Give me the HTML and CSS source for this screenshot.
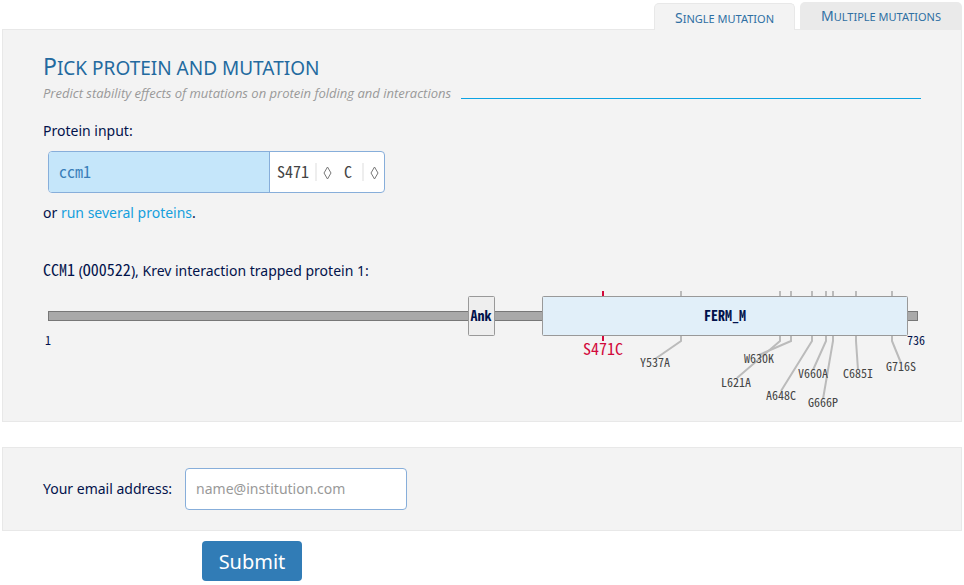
FILE: index.html
```html
<!DOCTYPE html>
<html lang="en">
<head>
<meta charset="utf-8">
<title>Pick protein and mutation</title>
<link rel="stylesheet" href="styles.css">
</head>
<body>
<nav class="tabs">
  <a class="tab tab-active" href="#single">Single mutation</a>
  <a class="tab" href="#multiple">Multiple mutations</a>
</nav>
<form>
  <section class="panel" id="single">
    <h1 class="title">Pick protein and mutation</h1>
    <div class="subtitle"><em>Predict stability effects of mutations on protein folding and interactions</em><span class="rule"></span></div>
    <label class="label" for="protein">Protein input:</label>
    <div class="picker">
      <input class="protein" id="protein" type="text" value="ccm1">
      <div class="choice">
        <select class="select select-residue" aria-label="Residue"><option>S471</option></select>
        <svg class="arrows" width="18" height="18" viewBox="0 0 18 18"><path class="divider" d="M1 0V18"/><path class="diamond" d="M12.5 4L16 10L12.5 16L9 10Z"/></svg>
      </div>
      <div class="choice">
        <select class="select select-target" aria-label="Mutate to"><option>C</option></select>
        <svg class="arrows" width="18" height="18" viewBox="0 0 18 18"><path class="divider" d="M1 0V18"/><path class="diamond" d="M12.5 4L16 10L12.5 16L9 10Z"/></svg>
      </div>
    </div>
    <p class="alternative">or <a class="link" href="#several">run several proteins</a>.</p>
    <p class="protein-name"><span class="mono">CCM1</span> (<span class="mono">O00522</span>), Krev interaction trapped protein 1:</p>
    <svg class="diagram" viewBox="0 0 878 122" role="img" aria-label="Protein domains and mutations">
      <rect class="backbone" x="5.500" y="21.500" width="869" height="9"/>
      <g class="marks">
        <path d="M638 1V51L612 69"/>
        <path d="M737 1V51L694 88"/>
        <path d="M748 1V51L716 65"/>
        <path d="M769 1V51L738 101"/>
        <path d="M783 1V51L770 80"/>
        <path d="M790 1V51L780 109"/>
        <path d="M813 1V51L815 80"/>
        <path d="M849 1V51L858 73"/>
      </g>
      <path class="chosen-mark" d="M560 1V51"/>
      <rect class="domain domain-ank" x="425.500" y="6.500" width="26" height="39" rx="1"/>
      <rect class="domain domain-ferm" x="499.500" y="6.500" width="365" height="39" rx="1"/>
      <g class="domain-name">
        <text x="438" y="31">Ank</text>
        <text x="682" y="31">FERM_M</text>
      </g>
      <g class="position">
        <text x="5" y="55">1</text>
        <text x="873" y="55">736</text>
      </g>
      <text class="chosen" x="560" y="65">S471C</text>
      <g class="mutation">
        <text x="612" y="77">Y537A</text>
        <text x="716" y="73">W630K</text>
        <text x="693" y="97">L621A</text>
        <text x="738" y="110">A648C</text>
        <text x="770" y="88">V660A</text>
        <text x="780" y="117">G666P</text>
        <text x="815" y="88">C685I</text>
        <text x="858" y="81">G716S</text>
      </g>
    </svg>
  </section>
  <section class="panel contact">
    <label for="email">Your email address:</label>
    <input class="email" id="email" type="email" placeholder="name@institution.com">
  </section>
  <button class="submit" type="submit">Submit</button>
</form>
</body>
</html>
```
FILE: styles.css
```css
* { box-sizing: border-box; }
body {
  margin: 0;
  padding: 2px 2px 0;
  background: #fff;
  color: #02124b;
  font: 14px/20px "Noto Sans", "Open Sans", sans-serif;
}
.tabs {
  display: flex;
  justify-content: flex-end;
  align-items: flex-end;
  gap: 5px;
}
.tab {
  height: 28px;
  padding: 0 21px;
  border-radius: 5px 5px 0 0;
  background: #eaeaea;
  color: #2f6fa3;
  font-size: 11px;
  line-height: 28px;
  text-transform: uppercase;
  text-decoration: none;
}
.tab::first-letter { font-size: 14px; }
.tab-active {
  height: 27px;
  padding: 0 20px;
  border: 1px solid #e8e8e8;
  border-bottom: 0;
  background: #f3f3f3;
  position: relative;
}
.panel {
  margin-top: -1px;
  padding: 22px 40px 9px;
  border: 1px solid #e8e8e8;
  background: #f3f3f3;
}
.title {
  margin: 0;
  color: #236a9f;
  font-size: 19px;
  line-height: 29px;
  font-weight: 400;
  text-transform: uppercase;
}
.title::first-letter { font-size: 23px; }
.subtitle {
  display: flex;
  align-items: center;
  gap: 10px;
  color: #999;
  font-family: "Open Sans", "Noto Sans", sans-serif;
  font-size: 13px;
  line-height: 20px;
}
.rule {
  flex: 1;
  height: 1px;
  margin-top: 10px;
  background: #0ca3e3;
}
.label { display: block; margin-top: 18px; }
.mono, .protein, .select, .diagram {
  font-family: "Noto Sans Mono CJK JP", "Liberation Mono", monospace;
}
.mono { font-size: 16px; line-height: 20px; }
.picker {
  display: flex;
  width: 337px;
  height: 42px;
  margin: 10px 5px;
  border: 1px solid #87aeda;
  border-radius: 4px;
  background: #fff;
  overflow: hidden;
}
.protein {
  flex: 1;
  min-width: 0;
  padding: 0 10px 2px;
  border: 0;
  border-right: 1px solid #87aeda;
  background: #c5e6fa;
  color: #397eb9;
  font-size: 16px;
}
.choice { display: flex; align-items: center; }
.select {
  appearance: none;
  height: 38px;
  padding: 0 0 2px 7px;
  border: 0;
  background: transparent;
  color: #444;
  font-size: 16px;
}
.select-residue { width: 45px; }
.select-target { width: 25px; }
.arrows { margin-right: 4px; }
.divider { stroke: #eee; stroke-width: 2; }
.diamond { fill: none; stroke: #777; }
.alternative { margin: 0; }
.link { color: #159fdd; text-decoration: none; }
.protein-name { margin: 36px 0 9px; }
.diagram { display: block; width: 100%; overflow: visible; }
.backbone { fill: #a9a9a9; stroke: #777; }
.marks { fill: none; stroke: #bbb; stroke-width: 2; }
.chosen-mark { stroke: #d20a3c; stroke-width: 2; }
.domain { stroke: #999; }
.domain-ank { fill: #eee; }
.domain-ferm { fill: #e1eff9; }
.diagram text { text-anchor: middle; }
.domain-name { fill: #02124b; font-size: 14px; font-weight: 700; }
.position { fill: #02124b; font-size: 12px; }
.chosen { fill: #d20a3c; font-size: 16px; }
.mutation { fill: #444; font-size: 12px; }
.contact {
  display: flex;
  align-items: center;
  gap: 13px;
  margin-top: 25px;
  padding-top: 20px;
  padding-bottom: 20px;
}
.email {
  width: 222px;
  height: 42px;
  padding: 0 10px 2px;
  border: 1px solid #87aeda;
  border-radius: 4px;
  background: #fff;
  color: #444;
  font: inherit;
}
.email::placeholder { color: #999; }
.submit {
  display: block;
  width: 100px;
  height: 40px;
  margin: 10px 0 4px 200px;
  padding: 0;
  border: 0;
  border-radius: 4px;
  background: #317cb6;
  color: #fff;
  font-family: inherit;
  font-size: 20px;
}
```
